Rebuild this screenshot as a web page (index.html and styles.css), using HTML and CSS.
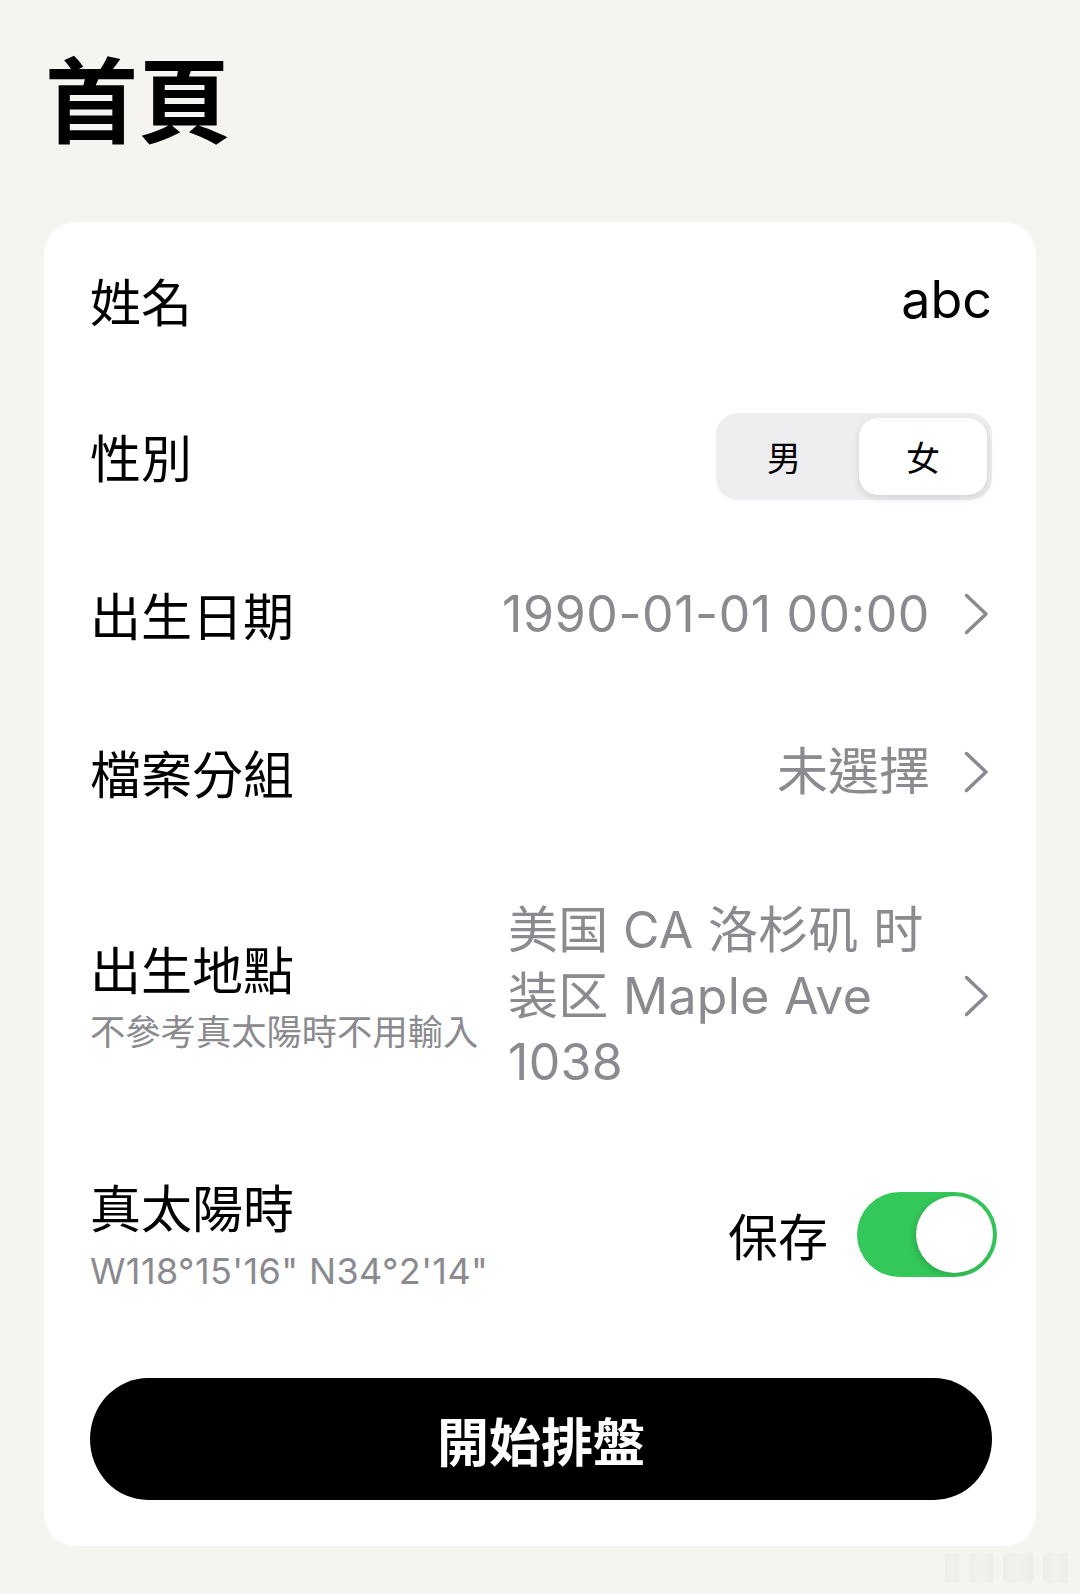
FILE: index.html
```html
<!DOCTYPE html>
<html lang="zh-Hant">
<head>
<meta charset="utf-8">
<title>首頁</title>
<link rel="stylesheet" href="styles.css">
</head>
<body>
<div class="page">
  <h1 class="title">首頁</h1>
  <div class="card">
    <div class="row row-first">
      <span class="label">姓名</span>
      <span class="value-dark">abc</span>
    </div>
    <div class="row">
      <span class="label">性別</span>
      <div class="seg">
        <span class="seg-item seg-left">男</span>
        <span class="seg-item seg-right is-active">女</span>
      </div>
    </div>
    <div class="row">
      <span class="label">出生日期</span>
      <div class="nav">
        <span class="value">1990-01-01 00:00</span>
        <svg class="chev" viewBox="0 0 25 42" width="25" height="42"><path d="M2.5 2.5 L22 21 L2.5 39.5"/></svg>
      </div>
    </div>
    <div class="row">
      <span class="label">檔案分組</span>
      <div class="nav">
        <span class="value value-cjk">未選擇</span>
        <svg class="chev" viewBox="0 0 25 42" width="25" height="42"><path d="M2.5 2.5 L22 21 L2.5 39.5"/></svg>
      </div>
    </div>
    <div class="row row-place">
      <div class="label-block">
        <div class="label">出生地點</div>
        <div class="sub">不參考真太陽時不用輸入</div>
      </div>
      <div class="nav nav-place">
        <div class="value place-value">美国 CA 洛杉矶 时装区 Maple Ave 1038</div>
        <svg class="chev" viewBox="0 0 25 42" width="25" height="42"><path d="M2.5 2.5 L22 21 L2.5 39.5"/></svg>
      </div>
    </div>
    <div class="row row-solar">
      <div class="label-block">
        <div class="label">真太陽時</div>
        <div class="sub sub-coord">W118°15'16" N34°2'14"</div>
      </div>
      <div class="save">
        <span class="save-label">保存</span>
        <span class="switch"><span class="knob"></span></span>
      </div>
    </div>
    <button class="start" type="button">開始排盤</button>
  </div>
  <div class="watermark"><span></span><span></span><span></span><span></span></div>
</div>
</body>
</html>
```
FILE: styles.css
```css
* { box-sizing: border-box; }

html, body {
  margin: 0;
  padding: 0;
  background: #f5f4f0;
}

body {
  font-family: Inter, "Noto Sans CJK TC", "Noto Sans CJK SC", sans-serif;
  color: #000;
}

.page {
  position: relative;
  width: 1080px;
  min-height: 1594px;
  padding-top: 49px;
}

.title {
  margin: 0 0 79px 45px;
  font-family: "Noto Sans CJK TC", sans-serif;
  font-size: 93px;
  line-height: 94px;
  font-weight: 700;
  letter-spacing: 0;
}

.card {
  margin-left: 44px;
  width: 992px;
  background: #fff;
  border-radius: 32px;
  padding: 0 44px 46px 46px;
  display: flex;
  flex-direction: column;
}

.row {
  height: 158px;
  display: flex;
  align-items: center;
  justify-content: space-between;
}

.row-first { height: 155px; }
.row-place { height: 289px; }
.row-solar { height: 194px; padding-bottom: 6px; }

.label {
  font-family: "Noto Sans CJK TC", sans-serif;
  font-size: 51px;
  line-height: 60px;
  font-weight: 400;
  color: #000;
}

.label-block {
  flex: none;
  display: flex;
  flex-direction: column;
  padding-top: 1px;
  white-space: nowrap;
}

.sub {
  margin-top: 13px;
  font-size: 35.3px;
  line-height: 44px;
  color: #8a8a8f;
}

.sub-coord {
  font-size: 36px;
  letter-spacing: 0.4px;
}

.value-dark {
  font-size: 52px;
  line-height: 60px;
  color: #000;
}

.nav {
  display: flex;
  align-items: center;
  gap: 34px;
  padding-right: 3px;
}

.value {
  font-size: 50px;
  line-height: 60px;
  color: #8a8a8f;
  letter-spacing: 0.6px;
}

.value-cjk {
  font-size: 51px;
  letter-spacing: 0;
}

.nav-place {
  flex: none;
  margin-left: auto;
  gap: 30px;
}

.place-value {
  width: 426px;
  line-height: 66px;
  letter-spacing: 0.3px;
}

.chev {
  display: block;
  flex: none;
}

.chev path {
  fill: none;
  stroke: #8a8a8f;
  stroke-width: 3.5;
  stroke-linecap: round;
  stroke-linejoin: round;
}

.seg {
  width: 276px;
  height: 87px;
  background: #eeeef0;
  border-radius: 22px;
  padding: 5px;
  display: flex;
}

.seg-item {
  display: flex;
  align-items: center;
  justify-content: center;
  font-family: "Noto Sans CJK TC", sans-serif;
  font-size: 34px;
  color: #000;
  border-radius: 19px;
}

.seg-left {
  width: 138px;
  padding-right: 12px;
}

.seg-right {
  width: 128px;
}

.seg-item.is-active {
  background: #fff;
  box-shadow: 0 3px 8px rgba(0, 0, 0, 0.12), 0 0 1px rgba(0, 0, 0, 0.06);
}

.save {
  display: flex;
  align-items: center;
  gap: 29px;
  margin-right: -5px;
}

.save-label {
  font-family: "Noto Sans CJK TC", sans-serif;
  font-size: 50px;
  line-height: 60px;
}

.switch {
  width: 140px;
  height: 85px;
  border-radius: 43px;
  background: #34c759;
  padding: 4px;
  display: flex;
  justify-content: flex-end;
}

.knob {
  width: 77px;
  height: 77px;
  border-radius: 50%;
  background: #fff;
  box-shadow: -2px 2px 6px rgba(0, 0, 0, 0.15);
}

.start {
  margin-top: 44px;
  height: 122px;
  width: 100%;
  border: none;
  border-radius: 58px / 61px;
  background: #000;
  color: #fff;
  font-family: "Noto Sans CJK TC", sans-serif;
  font-size: 52px;
  font-weight: 700;
  padding: 0;
  cursor: pointer;
}

.watermark {
  position: absolute;
  left: 945px;
  top: 1553px;
  width: 123px;
  height: 30px;
  display: flex;
  gap: 10px;
  opacity: 0.45;
}

.watermark span {
  display: block;
  height: 100%;
  background: linear-gradient(90deg, #e6e6e4, #f0f0ee, #e2e2e0);
  border-radius: 3px;
}

.watermark span:nth-child(1) { width: 14px; }
.watermark span:nth-child(2) { width: 24px; }
.watermark span:nth-child(3) { width: 30px; }
.watermark span:nth-child(4) { width: 25px; }
```
